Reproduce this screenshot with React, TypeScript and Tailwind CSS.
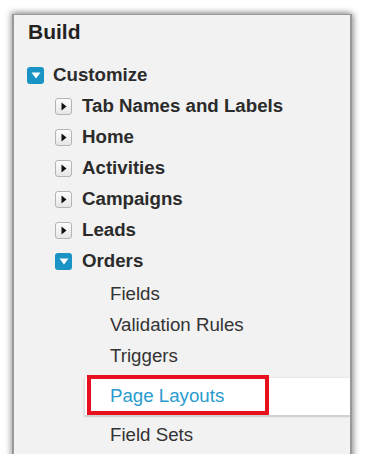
import React from "react";

const topItems = ["Tab Names and Labels", "Home", "Activities", "Campaigns", "Leads"];
const orderChildren = ["Fields", "Validation Rules", "Triggers"];

function BlueToggle() {
  return (
    <span className="flex h-[17px] w-[17px] shrink-0 items-center justify-center rounded-[3px] bg-[#1a94c4]">
      <svg width="10" height="7" viewBox="0 0 10 7">
        <path d="M0.5 0.5 L9.5 0.5 L5 6.5 Z" fill="#ffffff" />
      </svg>
    </span>
  );
}

function GrayToggle() {
  return (
    <span className="flex h-[17px] w-[17px] shrink-0 items-center justify-center rounded-[3px] border border-[#b4b4b4] bg-gradient-to-b from-[#fdfdfd] to-[#e6e6e6]">
      <svg width="6" height="9" viewBox="0 0 6 9">
        <path d="M0.5 0.5 L5.5 4.5 L0.5 8.5 Z" fill="#111111" />
      </svg>
    </span>
  );
}

export default function App() {
  return (
    <div className="h-[454px] w-[365px] overflow-hidden bg-white pl-[12px] pt-[14px] font-['Liberation_Sans',Arial,sans-serif]">
      <div className="h-[460px] w-[340px] border-l-2 border-r-2 border-t border-[#999] bg-[#f2f2f2] shadow-[2px_0_6px_rgba(0,0,0,0.35),-2px_-2px_6px_rgba(0,0,0,0.25)]">
        <div className="flex h-[33px] items-center pl-[14px] text-[21px] font-bold text-[#222]">
          Build
        </div>

        <div className="mt-[12px] flex h-[31px] items-center gap-[9px] pl-[13px] text-[18.7px] font-bold text-[#2b2b2b]">
          <BlueToggle />
          <span>Customize</span>
        </div>

        {topItems.map((item) => (
          <div
            key={item}
            className="flex h-[31px] items-center gap-[10px] pl-[41px] text-[18.7px] font-bold text-[#2b2b2b]"
          >
            <GrayToggle />
            <span>{item}</span>
          </div>
        ))}

        <div className="flex h-[31px] items-center gap-[10px] pl-[41px] text-[18.7px] font-bold text-[#2b2b2b]">
          <BlueToggle />
          <span>Orders</span>
        </div>

        <div className="mt-[2px]">
          {orderChildren.map((item) => (
            <div key={item} className="flex h-[31px] items-center pl-[96px] text-[18.7px] text-[#333]">
              {item}
            </div>
          ))}
        </div>

        <div className="relative ml-[71px] mt-[6px] flex h-[39px] items-center border-b-2 border-[#d2d2d2] bg-white pl-[25px] text-[18.7px] text-[#2a9bd0] shadow-[-1px_0_2px_rgba(0,0,0,0.12)]">
          Page Layouts
          <div className="absolute -top-[3px] left-[2px] h-[40px] w-[182px] border-4 border-[#e8101c]" />
        </div>

        <div className="mt-[3px] flex h-[31px] items-center pl-[96px] text-[18.7px] text-[#333]">
          Field Sets
        </div>
      </div>
    </div>
  );
}
